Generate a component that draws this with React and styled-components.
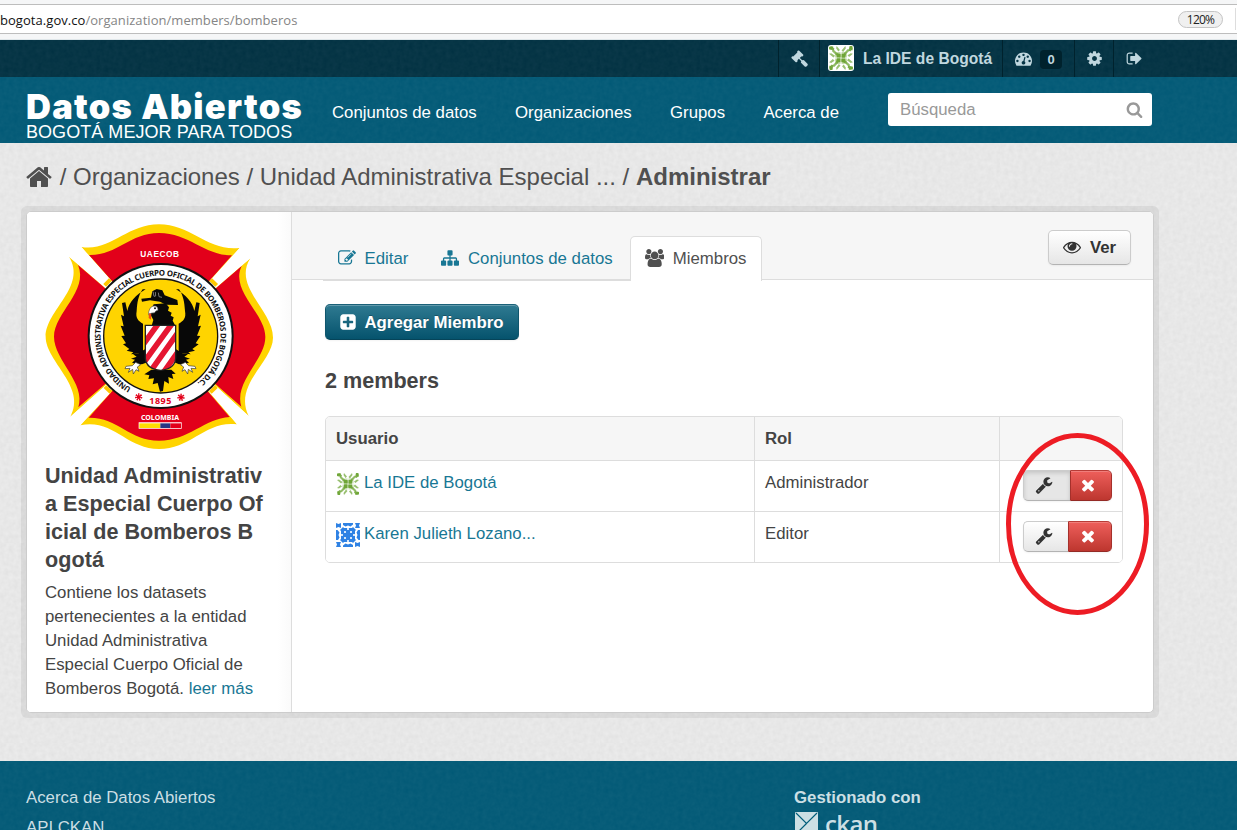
import React from "react";
import styled, { createGlobalStyle, css } from "styled-components";

const grain = (opacity) =>
  `url("data:image/svg+xml,%3Csvg xmlns='http://www.w3.org/2000/svg' width='100' height='100'%3E%3Cfilter id='n'%3E%3CfeTurbulence type='fractalNoise' baseFrequency='.22' numOctaves='2' stitchTiles='stitch'/%3E%3CfeColorMatrix values='0 0 0 0 1 0 0 0 0 1 0 0 0 0 1 0 0 0 ${opacity} 0'/%3E%3C/filter%3E%3Crect width='100' height='100' filter='url(%23n)'/%3E%3C/svg%3E")`;

const GlobalStyle = createGlobalStyle`
  *, *::before, *::after { box-sizing: border-box; }
  body {
    margin: 0;
    overflow: hidden;
    font: 16.8px/24px "Liberation Sans", Arial, sans-serif;
    color: #444;
    background: #005d7a;
  }
  a { color: #187794; text-decoration: none; }
  h1, h2, p { margin: 0; }
`;

const Page = styled.div`
  position: relative;
  display: flex;
  flex-direction: column;
  width: 1237px;
  height: 830px;
  overflow: hidden;
`;

const BrowserBar = styled.div`
  height: 40px;
  padding-top: 4px;
  background: #f5f6f7;
  border-bottom: 1px solid #dfe6e9;
`;

const AddressField = styled.div`
  display: flex;
  align-items: center;
  height: 30px;
  border: solid #bdbdbd;
  border-width: 1px 0;
  background: #fff;
  font: 13px/28px "Open Sans", "Noto Sans", sans-serif;
  color: #858585;
`;

const Url = styled.span`
  flex: 1;
  padding-top: 1px;
  letter-spacing: 0.05px;
  b { font-weight: 400; color: #111; }
`;

const Zoom = styled.span`
  width: 45px;
  height: 17px;
  margin-right: 12px;
  border: 1px solid #c4c4c4;
  border-radius: 9px;
  background: #f0f0f0;
  color: #222;
  font-size: 12px;
  line-height: 16px;
  letter-spacing: -0.8px;
  text-align: center;
`;

const FieldEnd = styled.span`
  width: 2px;
  height: 22px;
  border-left: 1px solid #ddd;
`;

const AccountBar = styled.div`
  display: flex;
  justify-content: flex-end;
  height: 37px;
  padding-right: 84px;
  background: ${grain(0.05)} #003041;
  color: #c0d7df;
`;

const AccountItem = styled.div`
  display: flex;
  align-items: center;
  width: ${(p) => p.$w}px;
  padding-left: ${(p) => p.$pad}px;
  border-left: 1px solid #00222d;
  font-size: 15.6px;
  font-weight: 700;
`;

const Avatar = styled.span`
  display: inline-flex;
  flex: none;
  width: ${(p) => p.$size}px;
  height: ${(p) => p.$size}px;
  margin-top: ${(p) => p.$drop || 0}px;
  margin-right: ${(p) => p.$gap}px;
  border-radius: ${(p) => p.$radius || 0}px;
  background: #fff;
  overflow: hidden;
`;

const Count = styled.span`
  width: 22px;
  height: 19px;
  margin-top: 1px;
  margin-left: 8px;
  border-radius: 4px;
  background: #00222d;
  font-size: 13px;
  line-height: 19px;
  text-align: center;
`;

const Masthead = styled.header`
  display: flex;
  height: 66px;
  padding-left: 26px;
  background: ${grain(0.05)} #005875;
  color: #fff;
`;

const Brand = styled.div`
  width: 306px;
  padding-top: 10px;
`;

const BrandName = styled.h1`
  font: 900 34.5px/40px Inter, sans-serif;
  letter-spacing: 1.25px;
  white-space: nowrap;
`;

const BrandTagline = styled.p`
  font-size: 18px;
  line-height: 22px;
  margin-top: -6px;
  letter-spacing: 0.05px;
  white-space: nowrap;
`;

const Nav = styled.nav`
  display: flex;
  gap: 38.4px;
  width: 556px;
  padding-top: 24px;
`;

const Search = styled.div`
  display: flex;
  align-items: center;
  justify-content: space-between;
  width: 264px;
  height: 33px;
  margin-top: 16px;
  padding: 0 9px 0 12px;
  border-radius: 3px;
  background: #fff;
  color: #999;
`;

const Main = styled.main`
  height: 618px;
  padding: 20px 0 0 21px;
  background: ${grain(0.42)} #e1e1e1;
`;

const Breadcrumb = styled.div`
  display: flex;
  align-items: center;
  height: 28px;
  margin: 0 0 15px 4px;
  color: #505050;
  font-size: 24px;
  white-space: pre;
  svg { margin-top: -1px; }
`;

const Wrapper = styled.div`
  width: 1138px;
  height: 512px;
  padding: 5px;
  border-radius: 6px;
  background: rgba(0, 0, 0, 0.06);
`;

const Card = styled.div`
  display: flex;
  height: 502px;
  border: 1px solid #ccc;
  border-radius: 5px;
  background: #fff;
  overflow: hidden;
`;

const Sidebar = styled.aside`
  width: 265px;
  padding: 12px 18px 0;
  border-right: 1px solid #ddd;
  background: linear-gradient(to right, #fff 95%, #fafafa);
`;

const OrgName = styled.h1`
  width: 222px;
  margin: 13px 0 7px;
  font-size: 21.6px;
  line-height: 28px;
  letter-spacing: 0.03px;
  white-space: nowrap;
`;

const OrgText = styled.p`
  width: 222px;
  white-space: nowrap;
`;

const Content = styled.section`
  flex: 1;
`;

const TabHeader = styled.div`
  display: flex;
  justify-content: space-between;
  height: 68px;
  padding: 18px 22px 0 31px;
  border-bottom: 1px solid #ddd;
  background: #f6f6f6;
`;

const Tabs = styled.div`
  display: flex;
  height: 51px;
  padding-top: 6px;
  border-bottom: 1px solid #ddd;
`;

const Tab = styled.a`
  display: flex;
  align-items: center;
  height: 45px;
  width: ${(p) => p.$w}px;
  padding-left: ${(p) => p.$pad}px;
  border: 1px solid transparent;
  border-bottom: 0;
  white-space: nowrap;
  svg { margin-top: -2px; }
  ${(p) =>
    p.$active &&
    css`
      border-color: #ddd;
      border-radius: 5px 5px 0 0;
      background: #fff;
      color: #505050;
    `}
`;

const Button = styled.button`
  display: flex;
  align-items: center;
  width: ${(p) => p.$w}px;
  height: ${(p) => p.$h}px;
  padding: ${(p) => p.$top || 0}px 0 0 ${(p) => p.$pad}px;
  border: 1px solid #ccc;
  border-bottom-color: #b3b3b3;
  border-radius: 5px;
  background: linear-gradient(#fff, #e6e6e6);
  box-shadow: inset 0 1px 0 rgba(255, 255, 255, 0.2), 0 1px 2px rgba(0, 0, 0, 0.05);
  color: #333;
  font: 700 16.8px/24px "Liberation Sans", Arial, sans-serif;
  white-space: nowrap;
  svg { margin-top: -2px; }
  ${(p) =>
    p.$kind === "primary" &&
    css`
      border-color: #1b6178 #10566d #064459;
      background: linear-gradient(#2f7a91, #05536d);
      box-shadow: inset 0 1px 0 rgba(255, 255, 255, 0.25), 0 1px 2px rgba(0, 0, 0, 0.05);
      color: #fff;
      text-shadow: 0 -1px 0 rgba(0, 0, 0, 0.25);
    `}
  ${(p) =>
    p.$kind === "danger" &&
    css`
      border-color: #b83c37 #a5302b #942a25;
      border-radius: 0 5px 5px 0;
      background: linear-gradient(#ee5f5b, #bd362f);
      box-shadow: inset 0 1px 0 rgba(255, 255, 255, 0.2), 0 1px 2px rgba(0, 0, 0, 0.05);
      color: #fff;
    `}
  ${(p) => p.$first && css`border-radius: 5px 0 0 5px; border-right: 0;`}
  ${(p) =>
    p.$pressed &&
    css`
      background: #e6e6e6;
      box-shadow: inset 0 2px 4px rgba(0, 0, 0, 0.15), 0 1px 2px rgba(0, 0, 0, 0.05);
    `}
`;

const Body = styled.div`
  padding: 24px 30px 0 33px;
`;

const Heading = styled.h2`
  margin: 27px 0 22px;
  font-size: 21.6px;
  line-height: 27px;
`;

const Table = styled.div`
  border: 1px solid #ddd;
  border-radius: 5px;
  overflow: hidden;
`;

const Row = styled.div`
  display: grid;
  grid-template-columns: 428px 245px 1fr;
  height: ${(p) => (p.$head ? 43 : 51)}px;
  border-top: ${(p) => (p.$head ? 0 : "1px solid #ddd")};
  background: ${(p) => (p.$head ? "#f6f6f6" : "#fff")};
  font-weight: ${(p) => (p.$head ? 700 : 400)};
`;

const Cell = styled.div`
  display: flex;
  align-items: flex-start;
  padding: 10px 0 0 10px;
  & + & { border-left: 1px solid #ddd; }
`;

const Actions = styled(Cell)`
  padding: 9px 0 0 23px;
`;

const Footer = styled.footer`
  display: flex;
  height: 69px;
  padding: 22px 0 0 26px;
  background: ${grain(0.05)} #005875;
  color: #ccdfe4;
  line-height: 30px;
  overflow: hidden;
`;

const FooterLinks = styled.div`
  width: 768px;
`;

const Managed = styled.div`
  font-size: 16.8px;
  font-weight: 700;
`;

const CkanLogo = styled.div`
  display: flex;
  align-items: flex-start;
  height: 28px;
  margin-top: -1px;
  font: 600 24px/23px "Open Sans", sans-serif;
  letter-spacing: -0.6px;
  svg { margin: 0 7px 0 1px; }
`;

const Annotation = styled.svg`
  position: absolute;
  left: 1004px;
  top: 431px;
  pointer-events: none;
`;

const IconBox = styled.svg`
  flex: none;
  fill: currentColor;
  margin-right: ${(p) => p.$gap || 0}px;
`;

const icons = {
  home: "M1472 992v480q0 26-19 45t-45 19h-384v-384h-256v384h-384q-26 0-45-19t-19-45v-480q0-1 .5-3t.5-3l575-474 575 474q1 2 1 6zm223-69l-62 74q-8 9-21 11h-3q-13 0-21-7l-692-577-692 577q-12 8-24 7-13-2-21-11l-62-74q-8-10-7-23.5t11-21.5l719-599q32-26 76-26t76 26l244 204v-195q0-14 9-23t23-9h192q14 0 23 9t9 23v408l219 182q10 8 11 21.5t-7 23.5z",
  search: "M1216 832q0-185-131.5-316.5t-316.5-131.5-316.5 131.5-131.5 316.5 131.5 316.5 316.5 131.5 316.5-131.5 131.5-316.5zm512 832q0 52-38 90t-90 38q-54 0-90-38l-343-342q-179 124-399 124-143 0-273.5-55.5t-225-150-150-225-55.5-273.5 55.5-273.5 150-225 225-150 273.5-55.5 273.5 55.5 225 150 150 225 55.5 273.5q0 220-124 399l343 343q37 37 37 90z",
  signout: "M704 1440q0 4 1 20t.5 26.5-3 23.5-10 19.5-20.5 6.5h-320q-119 0-203.5-84.5t-84.5-203.5v-704q0-119 84.5-203.5t203.5-84.5h320q13 0 22.5 9.5t9.5 22.5q0 4 1 20t.5 26.5-3 23.5-10 19.5-20.5 6.5h-320q-66 0-113 47t-47 113v704q0 66 47 113t113 47h312l11.5 1 11.5 3 8 5.5 7 9 2 13.5zm928-544q0 26-19 45l-544 544q-19 19-45 19t-45-19-19-45v-288h-448q-26 0-45-19t-19-45v-384q0-26 19-45t45-19h448v-288q0-26 19-45t45-19 45 19l544 544q19 19 19 45z",
  edit: "M888 1184l116-116-152-152-116 116v56h96v96h56zm440-720q-16-16-33 1l-350 350q-17 17-1 33t33-1l350-350q17-17 1-33zm80 594v190q0 119-84.5 203.5t-203.5 84.5h-832q-119 0-203.5-84.5t-84.5-203.5v-832q0-119 84.5-203.5t203.5-84.5h832q63 0 117 25 15 7 18 23 3 17-9 29l-49 49q-14 14-32 8-23-6-45-6h-832q-66 0-113 47t-47 113v832q0 66 47 113t113 47h832q66 0 113-47t47-113v-126q0-13 9-22l64-64q15-15 35-7t20 29zm-96-738l288 288-672 672h-288v-288zm444 132l-92 92-288-288 92-92q28-28 68-28t68 28l152 152q28 28 28 68t-28 68z",
  sitemap: "M1792 1248v320q0 40-28 68t-68 28h-320q-40 0-68-28t-28-68v-320q0-40 28-68t68-28h96v-192h-512v192h96q40 0 68 28t28 68v320q0 40-28 68t-68 28h-320q-40 0-68-28t-28-68v-320q0-40 28-68t68-28h96v-192h-512v192h96q40 0 68 28t28 68v320q0 40-28 68t-68 28h-320q-40 0-68-28t-28-68v-320q0-40 28-68t68-28h96v-192q0-52 38-90t90-38h512v-192h-96q-40 0-68-28t-28-68v-320q0-40 28-68t68-28h320q40 0 68 28t28 68v320q0 40-28 68t-68 28h-96v192h512q52 0 90 38t38 90v192h96q40 0 68 28t28 68z",
  users: "M593 896q-162 5-265 128h-134q-82 0-138-40.5t-56-118.5q0-353 124-353 6 0 43.5 21t97.5 42.5 119 21.5q67 0 133-23-5 37-5 66 0 139 81 256zm1071 637q0 120-73 189.5t-194 69.5h-874q-121 0-194-69.5t-73-189.5q0-53 3.5-103.5t14-109 26.5-108.5 43-97.5 62-81 85.5-53.5 111.5-20q10 0 43 21.5t73 48 107 48 135 21.5 135-21.5 107-48 73-48 43-21.5q61 0 111.5 20t85.5 53.5 62 81 43 97.5 26.5 108.5 14 109 3.5 103.5zm-1024-1277q0 106-75 181t-181 75-181-75-75-181 75-181 181-75 181 75 75 181zm704 384q0 159-112.5 271.5t-271.5 112.5-271.5-112.5-112.5-271.5 112.5-271.5 271.5-112.5 271.5 112.5 112.5 271.5zm576 225q0 78-56 118.5t-138 40.5h-134q-103-123-265-128 81-117 81-256 0-29-5-66 66 23 133 23 59 0 119-21.5t97.5-42.5 43.5-21q124 0 124 353zm-128-609q0 106-75 181t-181 75-181-75-75-181 75-181 181-75 181 75 75 181z",
  plus: "M1408 960v-128q0-26-19-45t-45-19h-320v-320q0-26-19-45t-45-19h-128q-26 0-45 19t-19 45v320h-320q-26 0-45 19t-19 45v128q0 26 19 45t45 19h320v320q0 26 19 45t45 19h128q26 0 45-19t19-45v-320h320q26 0 45-19t19-45zm256-544v960q0 119-84.5 203.5t-203.5 84.5h-960q-119 0-203.5-84.5t-84.5-203.5v-960q0-119 84.5-203.5t203.5-84.5h960q119 0 203.5 84.5t84.5 203.5z",
  eye: "M1664 960q-152-236-381-353 61 104 61 225 0 185-131.5 316.5t-316.5 131.5-316.5-131.5-131.5-316.5q0-121 61-225-229 117-381 353 133 205 333.5 326.5t434.5 121.5 434.5-121.5 333.5-326.5zm-720-384q0-20-14-34t-34-14q-125 0-214.5 89.5t-89.5 214.5q0 20 14 34t34 14 34-14 14-34q0-86 61-147t147-61q20 0 34-14t14-34zm848 384q0 34-20 69-140 230-376.5 368.5t-499.5 138.5-499.5-139-376.5-368q-20-35-20-69t20-69q140-229 376.5-368t499.5-139 499.5 139 376.5 368q20 35 20 69z",
  wrench: "M448 1472q0-26-19-45t-45-19-45 19-19 45 19 45 45 19 45-19 19-45zm644-420l-682 682q-37 37-90 37-52 0-91-37l-106-108q-38-36-38-90 0-53 38-91l681-681q39 98 114.5 173.5t173.5 114.5zm634-435q0 39-23 106-47 134-164.5 217.5t-258.5 83.5q-185 0-316.5-131.5t-131.5-316.5 131.5-316.5 316.5-131.5q58 0 121.5 16.5t107.5 46.5q16 11 16 28t-16 28l-293 169v224l193 107q5-3 79-48.5t135.5-81 70.5-35.5q15 0 23.5 10t8.5 25z",
  times: "M1490 1322q0 40-28 68l-136 136q-28 28-68 28t-68-28l-294-294-294 294q-28 28-68 28t-68-28l-136-136q-28-28-28-68t28-68l294-294-294-294q-28-28-28-68t28-68l136-136q28-28 68-28t68 28l294 294 294-294q28-28 68-28t68 28l136 136q28 28 28 68t-28 68l-294 294 294 294q28 28 28 68z",
  cog: "M1152 896q0-106-75-181t-181-75-181 75-75 181 75 181 181 75 181-75 75-181zm512-109v222q0 12-8 23t-20 13l-185 28q-19 54-39 91 35 50 107 138 10 12 10 25t-9 23q-27 37-99 108t-94 71q-12 0-26-9l-138-108q-44 23-91 38-16 136-29 186-7 28-36 28h-222q-14 0-24.5-8.5t-11.5-21.5l-28-184q-49-16-90-37l-141 107q-10 9-25 9-14 0-25-11-126-114-165-168-7-10-7-23 0-12 8-23 15-21 51-66.5t54-70.5q-27-50-41-99l-183-27q-13-2-21-12.5t-8-23.5v-222q0-12 8-23t19-13l186-28q14-46 39-92-40-57-107-138-10-12-10-24 0-10 9-23 26-36 98.5-107.5t94.5-71.5q13 0 26 10l138 107q44-23 91-38 16-136 29-186 7-28 36-28h222q14 0 24.5 8.5t11.5 21.5l28 184q49 16 90 37l142-107q9-9 24-9 13 0 25 10 129 119 165 170 7 8 7 22 0 12-8 23-15 21-51 66.5t-54 70.5q26 50 41 98l183 28q13 2 21 12.5t8 23.5z",
  gavel: "M1771 1536q0 53-37 90l-107 108q-39 37-91 37-53 0-90-37l-363-364q-38-36-38-90 0-53 43-96l-256-256-126 126q-14 14-34 14t-34-14q2 2 12.5 12t12.5 13 10 11.5 10 13.5 6 13.5 5.5 16.5 1.5 18q0 38-28 68-3 3-16.5 18t-19 20.5-18.5 16.5-22 15.5-22 9-26 4.5q-40 0-68-28l-408-408q-28-28-28-68 0-13 4.5-26t9-22 15.5-22 16.5-18.5 20.5-19 18-16.5q30-28 68-28 10 0 18 1.5t16.5 5.5 13.5 6 13.5 10 11.5 10 13 12.5 12 12.5q-14-14-14-34t14-34l348-348q14-14 34-14t34 14q-2-2-12.5-12t-12.5-13-10-11.5-10-13.5-6-13.5-5.500-16.500-1.500-18q0-38 28-68 3-3 16.500-18t19-20.500 18.500-16.500 22-15.500 22-9 26-4.500q40 0 68 28l408 408q28 28 28 68 0 13-4.500 26t-9 22-15.500 22-16.500 18.500-20.500 19-18 16.500q-30 28-68 28-10 0-18-1.500t-16.500-5.500-13.500-6-13.500-10-11.500-10-13-12.500-12-12.500q14 14 14 34t-14 34l-126 126 256 256q43-43 96-43 52 0 91 37l363 363q37 39 37 91z",
  gauge: "M384 1152q0-53-37.5-90.5t-90.5-37.5-90.5 37.5-37.5 90.5 37.5 90.5 90.5 37.5 90.5-37.5 37.5-90.5zm192-448q0-53-37.5-90.5t-90.5-37.5-90.5 37.5-37.5 90.5 37.5 90.5 90.5 37.5 90.5-37.5 37.5-90.5zm428 481l101-382q6-26-7.5-48.5t-38.5-29.5-48 6.5-30 39.5l-101 382q-60 5-107 43.5t-63 98.5q-20 77 20 146t117 89 146-20 89-117q16-60-6-117t-72-91zm660-33q0-53-37.5-90.5t-90.5-37.5-90.5 37.5-37.5 90.5 37.5 90.5 90.5 37.5 90.5-37.5 37.5-90.5zm-640-640q0-53-37.5-90.5t-90.5-37.5-90.5 37.5-37.5 90.5 37.5 90.5 90.5 37.5 90.5-37.5 37.5-90.5zm448 192q0-53-37.5-90.5t-90.5-37.5-90.5 37.5-37.5 90.5 37.5 90.5 90.5 37.5 90.5-37.5 37.5-90.5zm320 448q0 261-141 483-19 29-54 29h-1402q-35 0-54-29-141-221-141-483 0-182 71-348t191-286 286-191 348-71 348 71 286 191 191 286 71 348z",
};

function Icon({ name, size, gap }) {
  const w = name === "users" ? 1920 : 1792;
  return (
    <IconBox width={(size * w) / 1792} height={size} viewBox={`0 0 ${w} 1792`} $gap={gap}>
      <path d={icons[name]} />
    </IconBox>
  );
}

const quarterTurns = [0, 90, 180, 270];

function GreenIdenticon() {
  return (
    <svg viewBox="0 0 24 24" width="100%" height="100%" fill="#6fa536">
      {quarterTurns.map((a) => (
        <g key={a} transform={`rotate(${a} 12 12)`}>
          <path d="M1 2.500q1.500-2 4-1Q4.500 4 1.500 4zM20 1h2.500v3l-2 2-1.500-1z" opacity=".9" />
          <path d="M3.500 5.500L5 4l4 4-1.500 1.500z" opacity=".75" />
          <path d="M8 1l3 3.500-1.500 1.500L7.500 3zM1 8l2-.5L6.500 10 5 11.500z" opacity=".7" />
          <path d="M6.500 6.500h5v5h-5z" opacity=".4" />
          <path d="M7.500 8.500l1-1 3 1v3l-3-1z" />
        </g>
      ))}
      <path d="M8 8h3.500v3.500H8zM12.500 8H16v3.500h-3.500zM8 12.500h3.500V16H8zM12.500 12.500H16V16h-3.500z" />
    </svg>
  );
}

function BlueIdenticon() {
  return (
    <svg viewBox="0 0 24 24" width="100%" height="100%" fill="#2f82e4">
      {quarterTurns.map((a) => (
        <g key={a} transform={`rotate(${a} 12 12)`}>
          <path d="M0 0l2.500 1L5 0v5L2.500 4 0 5z" />
          <path d="M7 0h10v1.500L14.500 3.500 12 2.500 9.500 3.500 7 2z" />
          <path d="M4 7l3-3 1.500 1.500-3 3z" />
        </g>
      ))}
      <path d="M8 5h8l3 3v8l-3 3H8l-3-3V8z" />
      <path
        d="M11 4.500h2V7h-2zM11 17h2v2.500h-2zM4.500 11H7v2H4.500zM17 11h2.500v2H17zM8 8h2v2H8zM14 8h2v2h-2zM8 14h2v2H8zM14 14h2v2h-2z"
        fill="#fff"
        opacity=".8"
      />
    </svg>
  );
}

function Wing() {
  return (
    <path d="M348 223C318 240 298 262 293 288l-6-26-10 2 6 40-9-5 8 35-9-2 12 30-10 1 14 22-9 3 19 14-8 5 20 5-7 6 36-4V326c-14-8-23-16-19-38 2-26 4-44 18-65z" />
  );
}

function Emblem() {
  return (
    <svg width="228" height="225" viewBox="46 27 684 675" style={{ display: "block" }}>
      <defs>
        <path id="ring" d="M305 519A180 180 0 1 1 482 518" />
        <clipPath id="shield">
          <path d="M347 331H438V430Q436 462 393 466Q350 462 347 430Z" />
        </clipPath>
      </defs>
      <g fill="#ffd400">
        <path d="M155 96C245 110 290 28 388 28C484 28 535 110 630 99L393 363Z" />
        <path d="M118 125C173 215 48 285 48 365C48 440 172 515 122 605L393 363Z" />
        <path d="M662 130C608 215 730 285 730 368C730 440 610 510 657 603L393 363Z" />
        <path d="M152 631C250 610 290 702 388 702C484 702 530 615 622 628L393 363Z" />
      </g>
      <g fill="#e2001a">
        <path d="M178 120C262 122 300 54 388 54C478 54 525 122 607 121L393 363Z" />
        <path d="M145 150C178 227 73 295 73 365C73 435 170 505 146 577L393 363Z" />
        <path d="M636 153C600 227 707 295 707 366C707 435 612 500 635 575L393 363Z" />
        <path d="M177 608C262 606 300 677 388 677C478 677 525 610 600 606L393 363Z" />
      </g>
      <g fill="#fff">
        <path d="M155 96L118 125L222 211L242 194Z" />
        <path d="M630 99L662 130L562 211L543 194Z" />
        <path d="M122 605L152 631L244 532L225 515Z" />
        <path d="M657 603L622 628L542 532L561 515Z" />
      </g>
      <path d="M225 211l17-17M543 194l18 17M244 532l-18-17M542 532l18-17" stroke="#ffc800" strokeWidth="12" />
      <circle cx="393" cy="363" r="219" fill="#111" />
      <circle cx="393" cy="363" r="213" fill="#fff" />
      <circle cx="393" cy="363" r="173" fill="#111" />
      <circle cx="393" cy="363" r="169" fill="#ffd400" />
      <text fontFamily="Noto Sans" fontSize="23.5" fontWeight="700" fill="#111">
        <textPath href="#ring" textLength="920" lengthAdjust="spacing">
          UNIDAD ADMINISTRATIVA ESPECIAL CUERPO OFICIAL DE BOMBEROS DE BOGOTÁ D.C.
        </textPath>
      </text>
      <g fontWeight="700" textAnchor="middle">
        <text x="390" y="127" fontFamily="Liberation Sans" fontSize="25" textLength="116" fill="#fff">UAECOB</text>
        <text x="391" y="616" fontFamily="Noto Sans" fontSize="21" textLength="114" fill="#fff">COLOMBIA</text>
        <text x="392" y="567" fontFamily="Noto Sans" fontSize="27" textLength="67" fill="#e2001a">1895</text>
      </g>
      <g fill="none" stroke="#e2001a" strokeWidth="6">
        <circle cx="327" cy="546" r="8" strokeDasharray="4 3" />
        <circle cx="454" cy="547" r="8" strokeDasharray="4 3" />
      </g>
      <circle cx="327" cy="546" r="6" fill="#e2001a" />
      <circle cx="454" cy="547" r="6" fill="#e2001a" />
      <path d="M327 622h129v19H327z" fill="#fff" />
      <path d="M329 625h63v14h-63z" fill="#ffdf00" />
      <path d="M392 625h30v14h-30z" fill="#283583" />
      <path d="M422 625h32v14h-32z" fill="#e2001a" />
      <g fill="#080808">
        <Wing />
        <g transform="translate(787 0) scale(-1 1)"><Wing /></g>
        <path d="M335 251l29-3 4-19 13-7 17 4 7 15 38 14 2 15-36-1-18-9-30-4-24 4z" />
        <path d="M372 268l36-3 10 12-3 10 11 6-3 9 9 5-3 10 9 17-73 1 6-20-11-21z" />
        <path d="M347 402l-20 13-17 3 11 7-17 6 12 3-9 10 30 4 16-6M438 402l20 13 17 3-11 7 17 6-12 3 9 10-30 4-14-6" />
        <path d="M365 464h60l13 12-11 1 4 15-15-6 2 20-14-8-4 30-9 2-7-26-15 4 4-18-17 2 3-11-15-3z" />
      </g>
      <path d="M370 230l3 14 5-1-1-12M386 233l2 12 9 2" stroke="#777" strokeWidth="3" fill="none" />
      <path d="M357 291q5-21 20-18 9 2 8 13-7 0-11 8-8-2-17 6z" fill="#fff" stroke="#555" strokeWidth="2" />
      <circle cx="376" cy="280" r="3" fill="#111" />
      <path d="M358 294l7 3-1 17-7-5z" fill="#ed4b16" />
      <g fill="#fff" stroke="#333" strokeWidth="2">
        <path d="M318 442l-10 10-19 2-3 7 15-1-5 12 13-9 2 14 8-13 9 5-5-13 10-7z" />
        <path d="M467 442l10 10 19 2 3 7-15-1 5 12-13-9-2 14-8-13-9 5 5-13-10-7z" />
      </g>
      <g clipPath="url(#shield)">
        <path d="M340 325h105v150H340z" fill="#fff" />
        <path d="M335 396L386 326M340 446L430 322M356 478L450 346M392 486L455 396" stroke="#e51631" strokeWidth="17" />
      </g>
      <path d="M347 331H438V430Q436 462 393 466Q350 462 347 430Z" fill="none" stroke="#222" strokeWidth="4" />
    </svg>
  );
}

const members = [
  { name: "La IDE de Bogotá", role: "Administrador", Picture: GreenIdenticon, pressed: true },
  { name: "Karen Julieth Lozano...", role: "Editor", Picture: BlueIdenticon, pressed: false },
];

export default function App() {
  return (
    <>
      <GlobalStyle />
      <Page>
        <BrowserBar>
          <AddressField>
            <Url><b>bogota.gov.co</b>/organization/members/bomberos</Url>
            <Zoom>120%</Zoom>
            <FieldEnd />
          </AddressField>
        </BrowserBar>

        <AccountBar>
          <AccountItem $w={41} $pad={12}><Icon name="gavel" size={17} /></AccountItem>
          <AccountItem $w={183} $pad={8}>
            <Avatar $size={26} $gap={9} $radius={3} $drop={-1}><GreenIdenticon /></Avatar>
            La IDE de Bogotá
          </AccountItem>
          <AccountItem $w={72} $pad={12}>
            <Icon name="gauge" size={17} />
            <Count>0</Count>
          </AccountItem>
          <AccountItem $w={39} $pad={11}><Icon name="cog" size={17} /></AccountItem>
          <AccountItem $w={40} $pad={12}><Icon name="signout" size={17} /></AccountItem>
        </AccountBar>

        <Masthead>
          <Brand>
            <BrandName>Datos Abiertos</BrandName>
            <BrandTagline>BOGOTÁ MEJOR PARA TODOS</BrandTagline>
          </Brand>
          <Nav>
            <span>Conjuntos de datos</span>
            <span>Organizaciones</span>
            <span>Grupos</span>
            <span>Acerca de</span>
          </Nav>
          <Search>
            Búsqueda
            <Icon name="search" size={17} />
          </Search>
        </Masthead>

        <Main>
          <Breadcrumb>
            <Icon name="home" size={28} />
            <span> / Organizaciones / Unidad Administrativa Especial ... / <b>Administrar</b></span>
          </Breadcrumb>
          <Wrapper>
            <Card>
              <Sidebar>
                <Emblem />
                <OrgName>
                  Unidad Administrativ<br />a Especial Cuerpo Of<br />icial de Bomberos B<br />ogotá
                </OrgName>
                <OrgText>
                  Contiene los datasets<br />pertenecientes a la entidad<br />Unidad Administrativa<br />
                  Especial Cuerpo Oficial de<br />Bomberos Bogotá. <a>leer más</a>
                </OrgText>
              </Sidebar>
              <Content>
                <TabHeader>
                  <Tabs>
                    <Tab $w={103} $pad={14}><Icon name="edit" size={18} gap={8.5} />Editar</Tab>
                    <Tab $w={204} $pad={14}><Icon name="sitemap" size={18} gap={9} />Conjuntos de datos</Tab>
                    <Tab $w={132} $pad={14} $active><Icon name="users" size={18} gap={8.5} />Miembros</Tab>
                  </Tabs>
                  <Button $w={83} $h={35} $pad={14}><Icon name="eye" size={18} gap={9} />Ver</Button>
                </TabHeader>
                <Body>
                  <Button $kind="primary" $w={194} $h={36} $pad={13} $top={2}>
                    <Icon name="plus" size={18} gap={7.5} />Agregar Miembro
                  </Button>
                  <Heading>2 members</Heading>
                  <Table>
                    <Row $head>
                      <Cell>Usuario</Cell>
                      <Cell>Rol</Cell>
                      <Cell />
                    </Row>
                    {members.map(({ name, role, Picture, pressed }) => (
                      <Row key={name}>
                        <Cell>
                          <Avatar $size={24} $gap={4} $drop={1}><Picture /></Avatar>
                          <a>{name}</a>
                        </Cell>
                        <Cell>{role}</Cell>
                        <Actions>
                          <Button $w={pressed ? 47 : 45} $h={31} $pad={11} $first $pressed={pressed}>
                            <Icon name="wrench" size={18} />
                          </Button>
                          <Button $w={pressed ? 42 : 44} $h={31} $pad={pressed ? 8 : 10} $kind="danger">
                            <Icon name="times" size={18} />
                          </Button>
                        </Actions>
                      </Row>
                    ))}
                  </Table>
                </Body>
              </Content>
            </Card>
          </Wrapper>
        </Main>

        <Footer>
          <FooterLinks>
            <div>Acerca de Datos Abiertos</div>
            <div>API CKAN</div>
          </FooterLinks>
          <Managed>
            Gestionado con
            <CkanLogo>
              <svg width="23" height="23" viewBox="0 0 23 23">
                <path d="M1 0h21q1 0 1 1v21q0 1-1 1H1q-1 0-1-1V1q0-1 1-1z" fill="#ccdfe4" />
                <path d="M1 1l10.500 10.500L22 1M11.500 11.500L3 20" fill="none" stroke="#005d7a" strokeWidth="1.200" />
              </svg>
              ckan
            </CkanLogo>
          </Managed>
        </Footer>

        <Annotation width="148" height="186" viewBox="0 0 148 186">
          <ellipse cx="73.500" cy="93" rx="69" ry="88.500" fill="none" stroke="#ed1c24" strokeWidth="5" />
        </Annotation>
      </Page>
    </>
  );
}
